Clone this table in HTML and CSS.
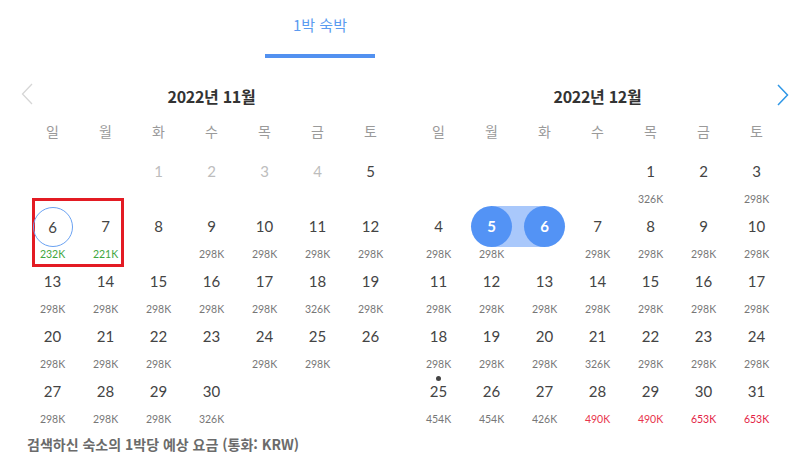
FILE: index.html
```html
<!DOCTYPE html>
<html lang="ko">
<head>
<meta charset="utf-8">
<title>달력</title>
<link rel="stylesheet" href="styles.css">
</head>
<body>
<div class="page">
  <div class="tabs">
    <div class="tab">1박 숙박</div>
  </div>

  <div class="months">
    <button class="nav prev" aria-label="이전 달">
      <svg width="12" height="22" viewBox="0 0 12 22"><path d="M11 1 L1.5 11 L11 21" fill="none" stroke="#d6d6d6" stroke-width="1.3"/></svg>
    </button>
    <button class="nav next" aria-label="다음 달">
      <svg width="12" height="22" viewBox="0 0 12 22"><path d="M1 1 L10.5 11 L1 21" fill="none" stroke="#2f97e6" stroke-width="1.5"/></svg>
    </button>

    <section class="month">
      <h2 class="month-title">2022년 11월</h2>
      <div class="dow"><span>일</span><span>월</span><span>화</span><span>수</span><span>목</span><span>금</span><span>토</span></div>
      <div class="days">
        <div class="cell"></div>
        <div class="cell"></div>
        <div class="cell"><span class="num past">1</span></div>
        <div class="cell"><span class="num past">2</span></div>
        <div class="cell"><span class="num past">3</span></div>
        <div class="cell"><span class="num past">4</span></div>
        <div class="cell"><span class="num">5</span></div>

        <div class="cell"><span class="num today">6</span><span class="price green">232K</span></div>
        <div class="cell"><span class="num">7</span><span class="price green">221K</span></div>
        <div class="cell"><span class="num">8</span></div>
        <div class="cell"><span class="num">9</span><span class="price">298K</span></div>
        <div class="cell"><span class="num">10</span><span class="price">298K</span></div>
        <div class="cell"><span class="num">11</span><span class="price">298K</span></div>
        <div class="cell"><span class="num">12</span><span class="price">298K</span></div>

        <div class="cell"><span class="num">13</span><span class="price">298K</span></div>
        <div class="cell"><span class="num">14</span><span class="price">298K</span></div>
        <div class="cell"><span class="num">15</span><span class="price">298K</span></div>
        <div class="cell"><span class="num">16</span><span class="price">298K</span></div>
        <div class="cell"><span class="num">17</span><span class="price">298K</span></div>
        <div class="cell"><span class="num">18</span><span class="price">326K</span></div>
        <div class="cell"><span class="num">19</span><span class="price">298K</span></div>

        <div class="cell"><span class="num">20</span><span class="price">298K</span></div>
        <div class="cell"><span class="num">21</span><span class="price">298K</span></div>
        <div class="cell"><span class="num">22</span><span class="price">298K</span></div>
        <div class="cell"><span class="num">23</span></div>
        <div class="cell"><span class="num">24</span><span class="price">298K</span></div>
        <div class="cell"><span class="num">25</span><span class="price">298K</span></div>
        <div class="cell"><span class="num">26</span></div>

        <div class="cell"><span class="num">27</span><span class="price">298K</span></div>
        <div class="cell"><span class="num">28</span><span class="price">298K</span></div>
        <div class="cell"><span class="num">29</span><span class="price">298K</span></div>
        <div class="cell"><span class="num">30</span><span class="price">326K</span></div>
      </div>
    </section>

    <section class="month">
      <h2 class="month-title">2022년 12월</h2>
      <div class="dow"><span>일</span><span>월</span><span>화</span><span>수</span><span>목</span><span>금</span><span>토</span></div>
      <div class="days">
        <div class="cell"></div>
        <div class="cell"></div>
        <div class="cell"></div>
        <div class="cell"></div>
        <div class="cell"><span class="num">1</span><span class="price">326K</span></div>
        <div class="cell"><span class="num">2</span></div>
        <div class="cell"><span class="num">3</span><span class="price">298K</span></div>

        <div class="cell"><span class="num">4</span><span class="price">298K</span></div>
        <div class="cell range-start"><span class="num sel">5</span><span class="price">298K</span></div>
        <div class="cell range-end"><span class="num sel">6</span></div>
        <div class="cell"><span class="num">7</span><span class="price">298K</span></div>
        <div class="cell"><span class="num">8</span><span class="price">298K</span></div>
        <div class="cell"><span class="num">9</span><span class="price">298K</span></div>
        <div class="cell"><span class="num">10</span><span class="price">298K</span></div>

        <div class="cell"><span class="num">11</span><span class="price">298K</span></div>
        <div class="cell"><span class="num">12</span><span class="price">298K</span></div>
        <div class="cell"><span class="num">13</span><span class="price">298K</span></div>
        <div class="cell"><span class="num">14</span><span class="price">298K</span></div>
        <div class="cell"><span class="num">15</span><span class="price">298K</span></div>
        <div class="cell"><span class="num">16</span><span class="price">298K</span></div>
        <div class="cell"><span class="num">17</span><span class="price">298K</span></div>

        <div class="cell"><span class="num">18</span><span class="price">298K</span></div>
        <div class="cell"><span class="num">19</span><span class="price">298K</span></div>
        <div class="cell"><span class="num">20</span><span class="price">298K</span></div>
        <div class="cell"><span class="num">21</span><span class="price">326K</span></div>
        <div class="cell"><span class="num">22</span><span class="price">298K</span></div>
        <div class="cell"><span class="num">23</span><span class="price">298K</span></div>
        <div class="cell"><span class="num">24</span><span class="price">298K</span></div>

        <div class="cell"><span class="dot"></span><span class="num">25</span><span class="price">454K</span></div>
        <div class="cell"><span class="num">26</span><span class="price">454K</span></div>
        <div class="cell"><span class="num">27</span><span class="price">426K</span></div>
        <div class="cell"><span class="num">28</span><span class="price red">490K</span></div>
        <div class="cell"><span class="num">29</span><span class="price red">490K</span></div>
        <div class="cell"><span class="num">30</span><span class="price red2">653K</span></div>
        <div class="cell"><span class="num">31</span><span class="price red2">653K</span></div>
      </div>
    </section>
  </div>

  <p class="note">검색하신 숙소의 1박당 예상 요금 (통화: KRW)</p>

  <div class="highlight-box"></div>
</div>
</body>
</html>
```

FILE: styles.css
```css
* { box-sizing: border-box; }

html, body {
  margin: 0;
  padding: 0;
  background: #fff;
}

body {
  font-family: "Lato", "Noto Sans CJK KR", sans-serif;
  color: #444;
}

.page {
  position: relative;
  width: 810px;
  height: 473px;
  overflow: hidden;
}

.tabs {
  display: flex;
  padding-left: 265px;
  height: 58px;
}

.tab {
  width: 110px;
  height: 58px;
  padding-top: 15px;
  border-bottom: 4px solid #5291f0;
  text-align: center;
  font-family: "Noto Sans CJK KR", sans-serif;
  font-size: 15px;
  line-height: 20px;
  color: #5b9bf0;
}

.months {
  position: relative;
  display: flex;
  gap: 15px;
  padding: 0 26px;
  margin-top: 26px;
}

.nav {
  position: absolute;
  top: -1px;
  width: 12px;
  height: 22px;
  padding: 0;
  border: 0;
  background: none;
  display: flex;
}

.nav.prev { left: 21px; }
.nav.next { left: 777px; top: 0; }

.month {
  width: 371px;
}

.month-title {
  margin: 0;
  height: 24px;
  text-align: center;
  font-family: "Noto Sans CJK KR", sans-serif;
  font-size: 16px;
  line-height: 24px;
  font-weight: 700;
  color: #333;
  letter-spacing: -0.3px;
}

.dow {
  display: grid;
  grid-template-columns: repeat(7, 1fr);
  margin-top: 8px;
  font-family: "Noto Sans CJK KR", sans-serif;
  font-size: 14px;
  line-height: 30px;
  color: #9a9a9a;
  text-align: center;
}

.days {
  display: grid;
  grid-template-columns: repeat(7, 1fr);
  grid-auto-rows: 55px;
  margin-top: 5px;
}

.cell {
  position: relative;
  display: flex;
  flex-direction: column;
  align-items: center;
}

.num {
  position: relative;
  z-index: 1;
  width: 41px;
  height: 41px;
  border-radius: 50%;
  text-align: center;
  font-size: 15px;
  line-height: 41px;
  color: #444;
}

.num.past { color: #bdbdbd; }

.num.today {
  width: 40px;
  height: 40px;
  line-height: 38px;
  border: 1px solid #6aa2f2;
  margin-top: 0.5px;
  margin-bottom: 0.5px;
}

.num.sel {
  background: #5393f5;
  color: #fff;
  font-weight: 700;
}

.range-start::before,
.range-end::before {
  content: "";
  position: absolute;
  top: 0;
  height: 41px;
  background: #a9c8fb;
}

.range-start::before { left: 50%; right: 0; }
.range-end::before { left: 0; right: 50%; }

.price {
  font-size: 10.5px;
  line-height: 14px;
  color: #777;
}

.price.green { color: #3ea640; }
.price.red { color: #e8344c; }
.price.red2 { color: #e31e45; }

.dot {
  position: absolute;
  top: 5px;
  left: 50%;
  width: 5px;
  height: 5px;
  margin-left: -2.5px;
  border-radius: 50%;
  background: #444;
}

.note {
  margin: 9px 0 0;
  padding-left: 27px;
  font-family: "Noto Sans CJK KR", sans-serif;
  font-size: 14px;
  line-height: 18px;
  font-weight: 700;
  color: #6b6b6b;
}

.highlight-box {
  position: absolute;
  left: 32px;
  top: 198px;
  width: 92px;
  height: 69px;
  border: 3px solid #e31b23;
}
```
